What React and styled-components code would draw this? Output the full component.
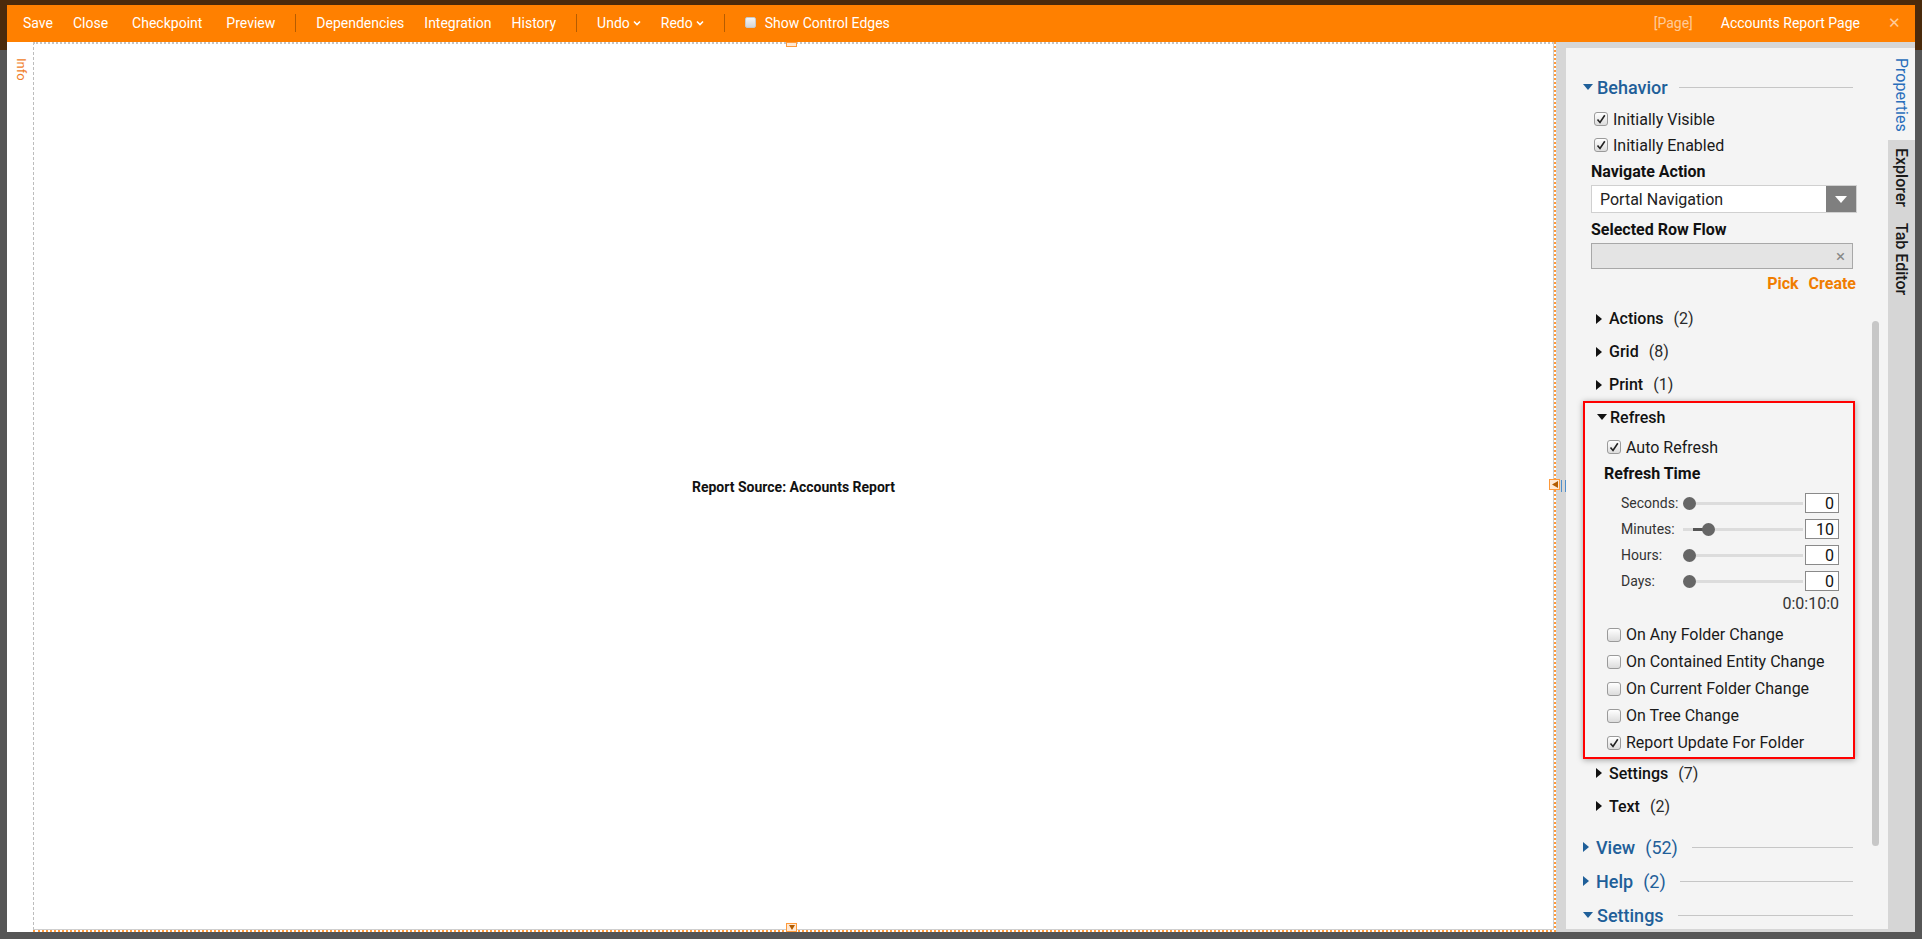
import React from 'react';
import styled, { createGlobalStyle } from 'styled-components';

const GlobalStyle = createGlobalStyle`
  html, body { margin: 0; padding: 0; }
  body { font-family: Roboto, "Liberation Sans", sans-serif; overflow: hidden; }
  * { box-sizing: border-box; }
`;

const Frame = styled.div`
  width: 1922px;
  height: 939px;
  padding: 5px 7px 7px 7px;
  background: linear-gradient(#4a2a0c 0 50px, #565656 50px);
`;

const Window = styled.div`
  height: 100%;
  display: flex;
  flex-direction: column;
  background: #fff;
`;

// --- Toolbar ---
const Toolbar = styled.div`
  height: 37px;
  flex: none;
  background: #ff8000;
  display: flex;
  align-items: center;
  padding: 0 14px 2px 16px;
  color: #fff;
  font-size: 14px;
`;

const ToolGroup = styled.div`
  display: flex;
  align-items: center;
  gap: 20px;
`;

const ToolItem = styled.span`
  display: inline-flex;
  align-items: center;
  gap: 3px;
  white-space: nowrap;
  color: ${p => p.$muted ? 'rgba(255,255,255,0.6)' : '#fff'};
`;

const Sep = styled.span`
  width: 1px;
  height: 18px;
  background: #b65c00;
`;

const ToolCheck = styled.span`
  width: 11px;
  height: 11px;
  border-radius: 2px;
  background: linear-gradient(#f4f4f4, #d6d6d6);
  border: 1px solid #c9c9c9;
  margin-right: 6px;
`;

const ToolRight = styled.div`
  margin-left: auto;
  display: flex;
  align-items: center;
  gap: 28px;
`;

// --- Body ---
const Body = styled.div`
  flex: 1;
  min-height: 0;
  display: flex;
`;

const InfoRail = styled.div`
  width: 26px;
  flex: none;
  background: #fff;
  padding: 16px 0 0 7px;
`;

const VerticalLabel = styled.div`
  writing-mode: vertical-rl;
  font-size: ${p => p.$size || 13}px;
  color: ${p => p.$color || '#222'};
  font-weight: ${p => p.$weight || 400};
`;

const CanvasOuter = styled.div`
  flex: 1;
  position: relative;
  border-right: 2px dotted #ff9a3a;
  border-bottom: 2px dotted #ff9a3a;
`;

const Canvas = styled.div`
  height: 100%;
  display: flex;
  align-items: center;
  justify-content: center;
  border-top: 2px dotted #c4c4c4;
  border-left: 1px dashed #bdbdbd;
  border-right: 1px solid #cfcfcf;
  border-bottom: 1px solid #cfcfcf;
  font-size: 14px;
  font-weight: 700;
  color: #111;
`;

const Handle = styled.div`
  position: absolute;
  width: 11px;
  height: ${p => p.$h || 11}px;
  border: 1px solid #ff9a3a;
  background: #ffe8d2;
  display: flex;
  align-items: center;
  justify-content: center;
`;

const Grip = styled.div`
  position: absolute;
  right: -12px;
  top: 438px;
  width: 5px;
  height: 12px;
  border-left: 1px solid #4e8fcb;
  border-right: 1px solid #4e8fcb;
`;

// --- Side panel ---
const Side = styled.div`
  width: 359px;
  flex: none;
  display: flex;
  background: #d6d6d6;
  padding: 6px 0 3px 10px;
`;

const Panel = styled.div`
  width: 322px;
  position: relative;
  background: #f4f4f4;
  padding: 0 31px 0 17px;
  color: #1a1a1a;
  font-size: 16px;
`;

const Scroll = styled.div`
  position: absolute;
  left: 306px;
  top: 273px;
  width: 7px;
  height: 525px;
  border-radius: 4px;
  background: #c7c7c7;
`;

const TabRail = styled.div`
  width: 27px;
  display: flex;
  flex-direction: column;
`;

const Tab = styled.div`
  display: flex;
  justify-content: center;
  padding: ${p => p.$active ? '10px 0 8px' : '8px 0'};
  background: ${p => p.$active ? '#f4f4f4' : 'transparent'};
`;

const SectionHead = styled.div`
  display: flex;
  align-items: center;
  height: ${p => p.$h || 26}px;
  margin-top: ${p => p.$mt || 0}px;
  color: #1f5f99;
  font-size: 18px;
  font-weight: 500;
`;

const HeadCount = styled.span`
  font-weight: 400;
  margin-left: 10px;
`;

const HeadLine = styled.div`
  flex: 1;
  height: 1px;
  background: #c6c6c6;
  margin: 0 4px 0 11px;
`;

const CheckRow = styled.div`
  display: flex;
  align-items: center;
  gap: 5px;
  height: ${p => p.$h || 26}px;
  margin-top: ${p => p.$mt || 0}px;
  padding-left: ${p => p.$pl || 11}px;
  color: #1a1a1a;
`;

const Box = styled.span`
  width: 14px;
  height: 14px;
  flex: none;
  border: 1px solid #9a9a9a;
  border-radius: 3px;
  background: linear-gradient(#ffffff, #dcdcdc);
  display: flex;
  align-items: center;
  justify-content: center;
`;

const FieldLabel = styled.div`
  display: flex;
  align-items: center;
  height: ${p => p.$h || 26}px;
  margin-top: ${p => p.$mt || 0}px;
  padding-left: ${p => p.$pl || 8}px;
  font-weight: 700;
  color: #111;
`;

const Select = styled.div`
  margin-left: 8px;
  width: 266px;
  height: 28px;
  display: flex;
  background: #fff;
  border: 1px solid #d0d0d0;
`;

const SelectText = styled.div`
  flex: 1;
  display: flex;
  align-items: center;
  padding-left: 8px;
  color: #222;
`;

const SelectBtn = styled.div`
  width: 30px;
  background: #7f7f7f;
  display: flex;
  align-items: center;
  justify-content: center;
`;

const TextInput = styled.div`
  margin: 1px 0 0 8px;
  width: 262px;
  height: 26px;
  background: #e4e4e4;
  border: 1px solid #a8a8a8;
  display: flex;
  align-items: center;
  justify-content: flex-end;
  padding-right: 7px;
  color: #888;
  font-size: 17px;
`;

const LinkRow = styled.div`
  display: flex;
  justify-content: flex-end;
  align-items: center;
  gap: 10px;
  height: 26px;
  margin-top: 1px;
  padding-right: 1px;
  color: #f07d00;
  font-weight: 700;
`;

const GroupRow = styled.div`
  display: flex;
  align-items: center;
  height: ${p => p.$h || 33}px;
  margin-top: ${p => p.$mt || 0}px;
  padding-left: ${p => p.$pl || 13}px;
  gap: 7px;
  font-weight: 500;
  color: #111;
`;

const Count = styled.span`
  font-weight: 400;
  color: #2a2a2a;
  margin-left: 3px;
`;

const RedBox = styled.div`
  width: 272px;
  border: 2px solid #f00;
  box-shadow: 0 1px 6px rgba(0, 0, 0, 0.35);
  padding: 1px 14px 1px 0;
`;

const SliderRow = styled.div`
  display: flex;
  align-items: center;
  height: ${p => p.$h || 26}px;
  margin-top: ${p => p.$mt || 0}px;
  padding-left: 36px;
  font-size: 14px;
  color: #333;
`;

const SliderLabel = styled.span`
  width: 62px;
`;

const Track = styled.div`
  position: relative;
  width: 120px;
  height: 3px;
  background: #dcdcdc;
`;

const Fill = styled.div`
  position: absolute;
  top: 0;
  height: 3px;
  background: #555;
`;

const Thumb = styled.div`
  position: absolute;
  top: -5px;
  width: 13px;
  height: 13px;
  border-radius: 50%;
  background: #666;
`;

const NumBox = styled.div`
  margin-left: 2px;
  width: 34px;
  height: 20px;
  background: #fff;
  border: 1px solid #8a8a8a;
  display: flex;
  align-items: center;
  justify-content: flex-end;
  padding-right: 4px;
  font-size: 16px;
  color: #111;
`;

const Total = styled.div`
  height: 18px;
  display: flex;
  align-items: center;
  justify-content: flex-end;
  color: #333;
`;

const Tri = ({ dir = 'down', color = '#111' }) => (
  dir === 'down' ? (
    <svg width="10" height="6" viewBox="0 0 10 6"><polygon points="0,0 10,0 5,6" fill={color} /></svg>
  ) : (
    <svg width="6" height="10" viewBox="0 0 6 10"><polygon points="0,0 6,5 0,10" fill={color} /></svg>
  )
);

const Check = ({ checked }) => (
  <Box>
    {checked && (
      <svg width="10" height="10" viewBox="0 0 10 10">
        <path d="M1.5 5.5 L4 8.5 L8.8 1.2" stroke="#222" strokeWidth="1.6" fill="none" />
      </svg>
    )}
  </Box>
);

const Chevron = () => (
  <svg width="8" height="6" viewBox="0 0 8 6"><polyline points="1,1.5 4,4.5 7,1.5" stroke="#fff" strokeWidth="1.6" fill="none" /></svg>
);

const sliders = [
  { label: 'Seconds:', value: '0', pos: 6, fill: null, mt: 4 },
  { label: 'Minutes:', value: '10', pos: 25, fill: [10, 25], mt: 0 },
  { label: 'Hours:', value: '0', pos: 6, fill: null, mt: 0 },
  { label: 'Days:', value: '0', pos: 6, fill: null, mt: 0 },
];

const triggers = [
  ['On Any Folder Change', false],
  ['On Contained Entity Change', false],
  ['On Current Folder Change', false],
  ['On Tree Change', false],
  ['Report Update For Folder', true],
];

const App = () => (
  <Frame>
    <GlobalStyle />
    <Window>
      <Toolbar>
        <ToolGroup>
          <ToolItem>Save</ToolItem>
          <ToolItem>Close</ToolItem>
          <ToolItem style={{ marginLeft: 4 }}>Checkpoint</ToolItem>
          <ToolItem style={{ marginLeft: 4 }}>Preview</ToolItem>
          <Sep />
          <ToolItem>Dependencies</ToolItem>
          <ToolItem>Integration</ToolItem>
          <ToolItem>History</ToolItem>
          <Sep />
          <ToolItem>Undo<Chevron /></ToolItem>
          <ToolItem>Redo<Chevron /></ToolItem>
          <Sep />
          <ToolItem><ToolCheck />Show Control Edges</ToolItem>
        </ToolGroup>
        <ToolRight>
          <ToolItem $muted>[Page]</ToolItem>
          <ToolItem>Accounts Report Page</ToolItem>
          <ToolItem $muted style={{ fontSize: 15 }}>✕</ToolItem>
        </ToolRight>
      </Toolbar>

      <Body>
        <InfoRail>
          <VerticalLabel $color="#f07d28" $size={13}>Info</VerticalLabel>
        </InfoRail>

        <CanvasOuter>
          <Canvas>Report Source: Accounts Report</Canvas>
          <Handle $h={5} style={{ left: 753, top: 0 }} />
          <Handle style={{ right: -6, top: 437 }}>
            <svg width="6" height="7" viewBox="0 0 6 7"><polygon points="6,0 6,7 0,3.5" fill="#b35c00" /></svg>
          </Handle>
          <Grip />
          <Handle $h={9} style={{ left: 753, bottom: -2 }}>
            <svg width="6" height="5" viewBox="0 0 6 5"><polygon points="0,0 6,0 3,5" fill="#b35c00" /></svg>
          </Handle>
        </CanvasOuter>

        <Side>
          <Panel>
            <SectionHead $mt={26}>
              <Tri color="#1f5f99" />
              <span style={{ marginLeft: 4 }}>Behavior</span>
              <HeadLine />
            </SectionHead>
            <CheckRow $mt={6}><Check checked />Initially Visible</CheckRow>
            <CheckRow><Check checked />Initially Enabled</CheckRow>
            <FieldLabel $h={27}>Navigate Action</FieldLabel>
            <Select>
              <SelectText>Portal Navigation</SelectText>
              <SelectBtn>
                <svg width="12" height="7" viewBox="0 0 12 7"><polygon points="0,0 12,0 6,7" fill="#fff" /></svg>
              </SelectBtn>
            </Select>
            <FieldLabel $mt={3}>Selected Row Flow</FieldLabel>
            <TextInput>×</TextInput>
            <LinkRow><span>Pick</span><span>Create</span></LinkRow>

            <GroupRow $mt={6}><Tri dir="right" />Actions<Count>(2)</Count></GroupRow>
            <GroupRow><Tri dir="right" />Grid<Count>(8)</Count></GroupRow>
            <GroupRow><Tri dir="right" />Print<Count>(1)</Count></GroupRow>

            <RedBox>
              <GroupRow $h={26} $pl={12} style={{ gap: 3 }}><Tri />Refresh</GroupRow>
              <CheckRow $mt={4} $pl={22}><Check checked />Auto Refresh</CheckRow>
              <FieldLabel $pl={19}>Refresh Time</FieldLabel>
              {sliders.map(s => (
                <SliderRow key={s.label} $mt={s.mt}>
                  <SliderLabel>{s.label}</SliderLabel>
                  <Track>
                    {s.fill && <Fill style={{ left: s.fill[0], width: s.fill[1] - s.fill[0] }} />}
                    <Thumb style={{ left: s.pos - 6 }} />
                  </Track>
                  <NumBox>{s.value}</NumBox>
                </SliderRow>
              ))}
              <Total>0:0:10:0</Total>
              <div style={{ height: 9 }} />
              {triggers.map(([label, on]) => (
                <CheckRow key={label} $h={27} $pl={22}><Check checked={on} />{label}</CheckRow>
              ))}
            </RedBox>

            <GroupRow $h={28}><Tri dir="right" />Settings<Count>(7)</Count></GroupRow>
            <GroupRow $h={28} $mt={5}><Tri dir="right" />Text<Count>(2)</Count></GroupRow>

            <SectionHead $mt={14}>
              <Tri dir="right" color="#1f5f99" />
              <span style={{ marginLeft: 7 }}>View</span><HeadCount>(52)</HeadCount>
              <HeadLine style={{ marginLeft: 14 }} />
            </SectionHead>
            <SectionHead $mt={8}>
              <Tri dir="right" color="#1f5f99" />
              <span style={{ marginLeft: 7 }}>Help</span><HeadCount>(2)</HeadCount>
              <HeadLine style={{ marginLeft: 14 }} />
            </SectionHead>
            <SectionHead $mt={8}>
              <Tri color="#1f5f99" />
              <span style={{ marginLeft: 4 }}>Settings</span>
              <HeadLine style={{ marginLeft: 14 }} />
            </SectionHead>
            <Scroll />
          </Panel>
          <TabRail>
            <Tab $active><VerticalLabel $size={16} $color="#2a6ebb">Properties</VerticalLabel></Tab>
            <Tab><VerticalLabel $size={16} $color="#1a1a1a" $weight={500}>Explorer</VerticalLabel></Tab>
            <Tab><VerticalLabel $size={16} $color="#1a1a1a" $weight={500}>Tab Editor</VerticalLabel></Tab>
          </TabRail>
        </Side>
      </Body>
    </Window>
  </Frame>
);

export default App;
